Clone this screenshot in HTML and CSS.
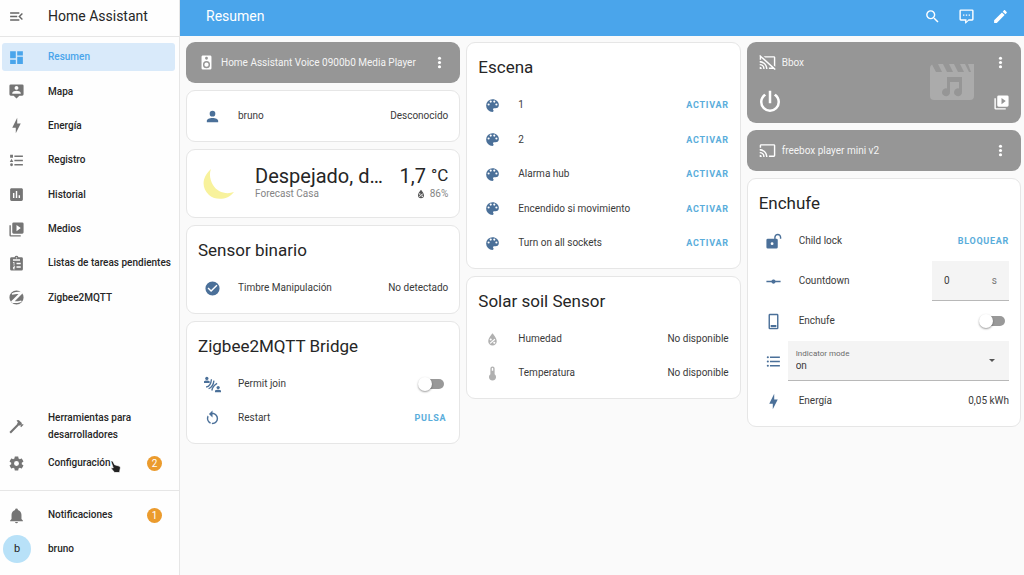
FILE: index.html
```html
<!DOCTYPE html>
<html lang="es">
<head>
<meta charset="utf-8">
<meta name="viewport" content="width=device-width, initial-scale=1">
<title>Resumen – Home Assistant</title>
<link rel="stylesheet" href="styles.css">
</head>
<body>
<svg class="sprite" aria-hidden="true">
  <symbol id="menu-open" viewBox="0 0 24 24"><path d="M21,15.61L19.59,17L14.58,12L19.59,7L21,8.39L17.44,12L21,15.61M3,6H16V8H3V6M3,13V11H13V13H3M3,18V16H16V18H3Z"/></symbol>
  <symbol id="dashboard" viewBox="0 0 24 24"><path d="M13,3V9H21V3M13,21H21V11H13M3,21H11V15H3M3,13H11V3H3V13Z"/></symbol>
  <symbol id="map" viewBox="0 0 24 24"><path d="M20,2H4A2,2 0 0,0 2,4V16A2,2 0 0,0 4,18H8L12,22L16,18H20A2,2 0 0,0 22,16V4A2,2 0 0,0 20,2M12,4.3C13.5,4.3 14.7,5.5 14.7,7C14.7,8.5 13.5,9.7 12,9.7C10.5,9.7 9.3,8.5 9.3,7C9.3,5.5 10.5,4.3 12,4.3M18,15H6V14.1C6,12.1 10,11 12,11C14,11 18,12.1 18,14.1V15Z" fill-rule="evenodd"/></symbol>
  <symbol id="bolt" viewBox="0 0 24 24"><path d="M11 15H6L13 1V9H18L11 23V15Z"/></symbol>
  <symbol id="logbook" viewBox="0 0 24 24"><path d="M5,9.5L7.5,14H2.5L5,9.5M3,4H7V8H3V4M5,20A2,2 0 0,0 7,18A2,2 0 0,0 5,16A2,2 0 0,0 3,18A2,2 0 0,0 5,20M9,5V7H21V5H9M9,19H21V17H9V19M9,13H21V11H9V13Z"/></symbol>
  <symbol id="chart" viewBox="0 0 24 24"><path fill-rule="evenodd" d="M9 17H7V10H9V17M13 17H11V7H13V17M17 17H15V13H17V17M19 3H5C3.89 3 3 3.89 3 5V19C3 20.1 3.9 21 5 21H19C20.11 21 21 20.11 21 19V5C21 3.9 20.1 3 19 3Z"/></symbol>
  <symbol id="media" viewBox="0 0 24 24"><path fill-rule="evenodd" d="M4,6H2V20A2,2 0 0,0 4,22H18V20H4V6M20,2H8A2,2 0 0,0 6,4V16A2,2 0 0,0 8,18H20A2,2 0 0,0 22,16V4A2,2 0 0,0 20,2M12,14.5V5.5L18,10L12,14.5Z"/></symbol>
  <symbol id="clipboard" viewBox="0 0 24 24"><path fill-rule="evenodd" d="M19 3H14.8A3 3 0 0 0 9.2 3H5A2 2 0 0 0 3 5V20A2 2 0 0 0 5 22H19A2 2 0 0 0 21 20V5A2 2 0 0 0 19 3M12 3A1 1 0 1 1 12 5A1 1 0 0 1 12 3M7 6H17V8H7ZM7 10H9V14H8V11H7ZM7 15H10V18H8V19H10V20H7V17H9V16H7ZM12 11H18V13H12ZM12 16H18V18H12Z"/></symbol>
  <symbol id="zigbee" viewBox="0 0 24 24"><path fill-rule="evenodd" d="M12 2A10 10 0 1 0 12 22A10 10 0 1 0 12 2M5.200 6.200L5.800 8.200C9 7.200 11.500 7 14.800 7L4.200 17.600L6.300 19.900C11 20 15 19.700 19.300 18.200L18.700 16.300C15.500 17.200 12.500 17.400 9.500 17.400L20.400 6.500L17.900 4C13 4 9 4.600 5.200 6.200Z"/></symbol>
  <symbol id="hammer" viewBox="0 0 24 24"><path d="M2,19.63L13.43,8.2L12.72,7.5L14.14,6.07L12,3.89C13.2,2.7 15.09,2.7 16.27,3.89L19.87,7.5L18.45,8.91H21.29L22,9.62L18.45,13.21L17.74,12.5V9.62L16.27,11.04L15.56,10.33L4.13,21.76L2,19.63Z"/></symbol>
  <symbol id="cog" viewBox="0 0 24 24"><path d="M12,15.5A3.5,3.5 0 0,1 8.5,12A3.5,3.5 0 0,1 12,8.5A3.5,3.5 0 0,1 15.5,12A3.5,3.5 0 0,1 12,15.5M19.43,12.97C19.47,12.65 19.5,12.33 19.5,12C19.5,11.67 19.47,11.34 19.43,11L21.54,9.37C21.73,9.22 21.78,8.95 21.66,8.73L19.66,5.27C19.54,5.05 19.27,4.96 19.05,5.05L16.56,6.05C16.04,5.66 15.5,5.32 14.87,5.07L14.5,2.42C14.46,2.18 14.25,2 14,2H10C9.75,2 9.54,2.18 9.5,2.42L9.13,5.07C8.5,5.32 7.96,5.66 7.44,6.05L4.95,5.05C4.73,4.96 4.46,5.05 4.34,5.27L2.34,8.73C2.21,8.95 2.27,9.22 2.46,9.37L4.57,11C4.53,11.34 4.5,11.67 4.5,12C4.5,12.33 4.53,12.65 4.57,12.97L2.46,14.63C2.27,14.78 2.21,15.05 2.34,15.27L4.34,18.73C4.46,18.95 4.73,19.03 4.95,18.95L7.44,17.94C7.96,18.34 8.5,18.68 9.13,18.93L9.5,21.58C9.54,21.82 9.75,22 10,22H14C14.25,22 14.46,21.82 14.5,21.58L14.87,18.93C15.5,18.67 16.04,18.34 16.56,17.94L19.05,18.95C19.27,19.03 19.54,18.95 19.66,18.73L21.66,15.27C21.78,15.05 21.73,14.78 21.54,14.63L19.43,12.97Z" fill-rule="evenodd"/></symbol>
  <symbol id="bell" viewBox="0 0 24 24"><path d="M21,19V20H3V19L5,17V11C5,7.9 7.03,5.17 10,4.29C10,4.19 10,4.1 10,4A2,2 0 0,1 12,2A2,2 0 0,1 14,4C14,4.1 14,4.19 14,4.29C16.97,5.17 19,7.9 19,11V17L21,19M14,21A2,2 0 0,1 12,23A2,2 0 0,1 10,21"/></symbol>
  <symbol id="palette" viewBox="0 0 24 24"><path fill-rule="evenodd" d="M17.5,12A1.5,1.5 0 0,1 16,10.5A1.5,1.5 0 0,1 17.5,9A1.5,1.5 0 0,1 19,10.5A1.5,1.5 0 0,1 17.5,12M14.5,8A1.5,1.5 0 0,1 13,6.5A1.5,1.5 0 0,1 14.5,5A1.5,1.5 0 0,1 16,6.5A1.5,1.5 0 0,1 14.5,8M9.5,8A1.5,1.5 0 0,1 8,6.5A1.5,1.5 0 0,1 9.5,5A1.5,1.5 0 0,1 11,6.5A1.5,1.5 0 0,1 9.5,8M6.5,12A1.5,1.5 0 0,1 5,10.5A1.5,1.5 0 0,1 6.5,9A1.5,1.5 0 0,1 8,10.5A1.5,1.5 0 0,1 6.5,12M12,3A9,9 0 0,0 3,12A9,9 0 0,0 12,21A1.5,1.5 0 0,0 13.5,19.5C13.5,19.11 13.35,18.76 13.11,18.5C12.88,18.23 12.73,17.88 12.73,17.5A1.5,1.5 0 0,1 14.23,16H16A5,5 0 0,0 21,11C21,6.58 16.97,3 12,3Z"/></symbol>
  <symbol id="account" viewBox="0 0 24 24"><path d="M12,4A4,4 0 0,1 16,8A4,4 0 0,1 12,12A4,4 0 0,1 8,8A4,4 0 0,1 12,4M12,14C16.42,14 20,15.79 20,18V20H4V18C4,15.79 7.58,14 12,14Z"/></symbol>
  <symbol id="check" viewBox="0 0 24 24"><path fill-rule="evenodd" d="M12 2A10 10 0 1 0 12 22A10 10 0 1 0 12 2M10 17L5 12L6.41 10.59L10 14.17L17.59 6.58L19 8L10 17Z"/></symbol>
  <symbol id="proximity" viewBox="0 0 24 24"><circle cx="4" cy="3.500" r="2.300"/><path d="M0 10V7.500C1 6 6.500 6 8 7.500V10ZM15.500 23V20.500C17 19 22.500 19 24 20.500V23Z"/><circle cx="20" cy="16.300" r="2.300"/><path fill="none" stroke="currentColor" stroke-width="1.900" d="M3 15.500C7 15 10 11 10.500 4.500M6.500 18C11 16 13.500 12 14 6.500M11 20.500C12 16 14 13 18.500 10.500"/></symbol>
  <symbol id="restart" viewBox="0 0 24 24"><path d="M12,4C14.1,4 16.1,4.8 17.6,6.3C20.7,9.4 20.7,14.5 17.6,17.6C15.8,19.5 13.3,20.2 10.9,19.9L11.4,17.9C13.1,18.1 14.9,17.5 16.2,16.2C18.5,13.9 18.5,10.1 16.2,7.7C15.1,6.6 13.5,6 12,6V10.6L7,5.6L12,0.6V4M6.3,17.6C3.7,15 3.3,11 5.1,7.9L6.6,9.4C5.5,11.6 5.9,14.4 7.8,16.2C8.3,16.7 8.9,17.1 9.6,17.4L9,19.4C8,19 7.1,18.4 6.3,17.6Z"/></symbol>
  <symbol id="speaker" viewBox="0 0 24 24"><path fill-rule="evenodd" d="M12,12A3,3 0 0,0 9,15A3,3 0 0,0 12,18A3,3 0 0,0 15,15A3,3 0 0,0 12,12M12,20A5,5 0 0,1 7,15A5,5 0 0,1 12,10A5,5 0 0,1 17,15A5,5 0 0,1 12,20M12,4A2,2 0 0,1 14,6A2,2 0 0,1 12,8C10.89,8 10,7.1 10,6C10,4.89 10.89,4 12,4M17,2H7C5.89,2 5,2.89 5,4V20A2,2 0 0,0 7,22H17A2,2 0 0,0 19,20V4C19,2.89 18.1,2 17,2Z"/></symbol>
  <symbol id="dots" viewBox="0 0 24 24"><circle cx="12" cy="6" r="2.200"/><circle cx="12" cy="12" r="2.200"/><circle cx="12" cy="18" r="2.200"/></symbol>
  <symbol id="cast" viewBox="0 0 24 24"><path d="M1,10V12A9,9 0 0,1 10,21H12C12,14.92 7.07,10 1,10M1,14V16A5,5 0 0,1 6,21H8A7,7 0 0,0 1,14M1,18V21H4A3,3 0 0,0 1,18M21,3H3C1.89,3 1,3.89 1,5V8H3V5H21V19H14V21H21A2,2 0 0,0 23,19V5C23,3.89 22.1,3 21,3Z"/></symbol>
  <symbol id="cast-off" viewBox="0 0 24 24"><path d="M1.6,1.27L0.25,2.75L1.41,3.8C1.16,4.13 1,4.55 1,5V8H3V5.23L18.2,19H14V21H20.41L22.31,22.72L23.65,21.24M6.5,3L8.7,5H21V16.14L23,17.95V5C23,3.89 22.1,3 21,3M1,10V12A9,9 0 0,1 10,21H12C12,14.92 7.08,10 1,10M1,14V16A5,5 0 0,1 6,21H8A7,7 0 0,0 1,14M1,18V21H4A3,3 0 0,0 1,18Z"/></symbol>
  <symbol id="power" viewBox="0 0 24 24"><path d="M16.56,5.44L15.11,6.89C16.84,7.94 18,9.83 18,12A6,6 0 0,1 12,18A6,6 0 0,1 6,12C6,9.83 7.16,7.94 8.88,6.88L7.44,5.44C5.36,6.88 4,9.28 4,12A8,8 0 0,0 12,20A8,8 0 0,0 20,12C20,9.28 18.64,6.88 16.56,5.44M13,3H11V13H13"/></symbol>
  <symbol id="movie" viewBox="0 0 24 20"><path fill-rule="evenodd" d="M1 3A2 2 0 0 1 2 1.200L4 5H7L5 1H7.500L9.500 5H12.500L10.500 1H13L15 5H18L16 1H18.500L20.500 5H21.500L20 1H23V17A2 2 0 0 1 21 19H3A2 2 0 0 1 1 17ZM9.500 7.500V13.200A2 2 0 1 0 11 15V10H15.500V13.200A2 2 0 1 0 17 15V7.500Z"/></symbol>
  <symbol id="search" viewBox="0 0 24 24"><path d="M9.5,3A6.5,6.5 0 0,1 16,9.5C16,11.11 15.41,12.59 14.44,13.73L14.71,14H15.5L20.5,19L19,20.5L14,15.5V14.71L13.73,14.44C12.59,15.41 11.11,16 9.5,16A6.5,6.5 0 0,1 3,9.500A6.5,6.5 0 0,1 9.5,3M9.5,5C7,5 5,7 5,9.500C5,12 7,14 9.500,14C12,14 14,12 14,9.500C14,7 12,5 9.500,5Z"/></symbol>
  <symbol id="assist" viewBox="0 0 24 24"><path fill-rule="evenodd" d="M4 2H20A2 2 0 0 1 22 4V16A2 2 0 0 1 20 18H15L11 22H10V18H4A2 2 0 0 1 2 16V4A2 2 0 0 1 4 2M4 4V16H12V19L15 16H20V4ZM7 9H9V11H7ZM11 9H13V11H11ZM15 9H17V11H15Z"/></symbol>
  <symbol id="pencil" viewBox="0 0 24 24"><path d="M20.71,7.04C21.1,6.65 21.1,6 20.71,5.63L18.37,3.29C18,2.9 17.35,2.9 16.96,3.29L15.12,5.12L18.87,8.87M3,17.25V21H6.75L17.81,9.93L14.06,6.18L3,17.25Z"/></symbol>
  <symbol id="unlock" viewBox="0 0 24 24"><path fill-rule="evenodd" d="M18,1C15.24,1 13,3.24 13,6V8H4A2,2 0 0,0 2,10V20A2,2 0 0,0 4,22H16A2,2 0 0,0 18,20V10A2,2 0 0,0 16,8H15V6A3,3 0 0,1 18,3A3,3 0 0,1 21,6V8H23V6C23,3.24 20.76,1 18,1M10,13A2,2 0 0,1 12,15A2,2 0 0,1 10,17A2,2 0 0,1 8,15A2,2 0 0,1 10,13Z"/></symbol>
  <symbol id="vertex" viewBox="0 0 24 24"><path d="M2,11H9.17C9.58,9.83 10.69,9 12,9C13.31,9 14.42,9.83 14.83,11H22V13H14.83C14.42,14.17 13.31,15 12,15C10.69,15 9.58,14.17 9.17,13H2V11Z"/></symbol>
  <symbol id="switch" viewBox="0 0 24 24"><path fill-rule="evenodd" d="M7 1H17A2 2 0 0 1 19 3V21A2 2 0 0 1 17 23H7A2 2 0 0 1 5 21V3A2 2 0 0 1 7 1M7 3V21H17V3ZM8 17H16V20H8Z"/></symbol>
  <symbol id="list" viewBox="0 0 24 24"><path d="M7,5H21V7H7V5M7,13V11H21V13H7M7,19V17H21V19H7"/><circle cx="4" cy="6" r="1.500"/><circle cx="4" cy="12" r="1.500"/><circle cx="4" cy="18" r="1.500"/></symbol>
  <symbol id="humidity" viewBox="0 0 24 24"><path fill-rule="evenodd" d="M12 3.300S6 10 6 14.300A6 6 0 0 0 18 14.300C18 10 12 3.300 12 3.300M9.500 10.500A1.500 1.500 0 1 1 9.500 13.500A1.500 1.500 0 0 1 9.500 10.500M14.800 11L16 12.200L9.200 18L8 16.800ZM14.500 15A1.500 1.500 0 1 1 14.500 18A1.500 1.500 0 0 1 14.500 15"/></symbol>
  <symbol id="thermometer" viewBox="0 0 24 24"><path fill-rule="evenodd" d="M15 13V5A3 3 0 0 0 9 5V13A5 5 0 1 0 15 13M12 4A1 1 0 0 1 13 5V8H11V5A1 1 0 0 1 12 4Z"/></symbol>
</svg>

<div class="app">
  <aside class="sidebar">
    <header class="brand">
      <button class="icon-button" aria-label="Alternar barra lateral"><svg class="icon"><use href="#menu-open"/></svg></button>
      <span>Home Assistant</span>
    </header>
    <nav class="nav" aria-label="Paneles">
      <a class="nav-item active" href="#resumen"><svg class="icon"><use href="#dashboard"/></svg><span>Resumen</span></a>
      <a class="nav-item" href="#mapa"><svg class="icon"><use href="#map"/></svg><span>Mapa</span></a>
      <a class="nav-item" href="#energia"><svg class="icon"><use href="#bolt"/></svg><span>Energía</span></a>
      <a class="nav-item" href="#registro"><svg class="icon"><use href="#logbook"/></svg><span>Registro</span></a>
      <a class="nav-item" href="#historial"><svg class="icon"><use href="#chart"/></svg><span>Historial</span></a>
      <a class="nav-item" href="#medios"><svg class="icon"><use href="#media"/></svg><span>Medios</span></a>
      <a class="nav-item" href="#tareas"><svg class="icon"><use href="#clipboard"/></svg><span>Listas de tareas pendientes</span></a>
      <a class="nav-item" href="#zigbee2mqtt"><svg class="icon"><use href="#zigbee"/></svg><span>Zigbee2MQTT</span></a>
    </nav>
    <nav class="nav-tools" aria-label="Herramientas">
      <a class="nav-item tall" href="#herramientas"><svg class="icon"><use href="#hammer"/></svg><span>Herramientas para desarrolladores</span></a>
      <a class="nav-item" href="#configuracion"><svg class="icon"><use href="#cog"/></svg><span class="pointed">Configuración
        <svg class="cursor" viewBox="0 0 12 15" aria-hidden="true"><path d="M1 1.500C2 .5 3 1 3.500 2L5 5L10 6.500C11.500 7 11.500 8.500 11 10L10.500 13.500H5L1.500 9.500C1 8.500 2 8 3 8.500L3.500 8.500Z" fill="#222" stroke="#fff" stroke-width=".8"/></svg></span><span class="badge">2</span></a>
    </nav>
    <div class="nav-user">
      <a class="nav-item" href="#notificaciones"><svg class="icon"><use href="#bell"/></svg><span>Notificaciones</span><span class="badge">1</span></a>
      <a class="nav-item profile" href="#perfil"><span class="avatar">b</span><span>bruno</span></a>
    </div>
  </aside>

  <div class="content">
    <header class="toolbar">
      <h1>Resumen</h1>
      <button class="icon-button" aria-label="Buscar"><svg class="icon"><use href="#search"/></svg></button>
      <button class="icon-button" aria-label="Asistente"><svg class="icon"><use href="#assist"/></svg></button>
      <button class="icon-button" aria-label="Editar"><svg class="icon"><use href="#pencil"/></svg></button>
    </header>

    <main class="board">
      <div class="column">
        <section class="media-card">
          <div class="media-head"><svg class="icon"><use href="#speaker"/></svg><span>Home Assistant Voice 0900b0 Media Player</span><button class="icon-button" aria-label="Más opciones"><svg class="icon"><use href="#dots"/></svg></button></div>
        </section>
        <section class="card untitled">
          <div class="row"><svg class="icon"><use href="#account"/></svg><span class="name">bruno</span><span>Desconocido</span></div>
        </section>
        <section class="card weather">
          <svg class="moon" viewBox="0 0 32 32" aria-hidden="true"><path d="M8 1C-1 9-2 20 6 27C13 33 25 32 31 24C23 27 14 24 10 17C7 12 6 6 8 1Z" fill="#f8f29c"/></svg>
          <div class="forecast"><span class="condition">Despejado, de noche</span><span class="minor">Forecast Casa</span></div>
          <div class="reading"><span class="temperature">1,7 <span class="unit">°C</span></span><span class="minor humidity"><svg class="icon"><use href="#humidity"/></svg>86%</span></div>
        </section>
        <section class="card">
          <h2>Sensor binario</h2>
          <div class="rows">
            <div class="row"><svg class="icon"><use href="#check"/></svg><span class="name">Timbre Manipulación</span><span>No detectado</span></div>
          </div>
        </section>
        <section class="card">
          <h2>Zigbee2MQTT Bridge</h2>
          <div class="rows">
            <div class="row"><svg class="icon"><use href="#proximity"/></svg><label class="name" for="permit">Permit join</label><input class="switch" id="permit" type="checkbox"></div>
            <div class="row"><svg class="icon"><use href="#restart"/></svg><span class="name">Restart</span><button class="action inset-end">PULSA</button></div>
          </div>
        </section>
      </div>

      <div class="column">
        <section class="card">
          <h2>Escena</h2>
          <div class="rows scenes">
            <div class="row"><svg class="icon"><use href="#palette"/></svg><span class="name">1</span><button class="action">ACTIVAR</button></div>
            <div class="row"><svg class="icon"><use href="#palette"/></svg><span class="name">2</span><button class="action">ACTIVAR</button></div>
            <div class="row"><svg class="icon"><use href="#palette"/></svg><span class="name">Alarma hub</span><button class="action">ACTIVAR</button></div>
            <div class="row"><svg class="icon"><use href="#palette"/></svg><span class="name">Encendido si movimiento</span><button class="action">ACTIVAR</button></div>
            <div class="row"><svg class="icon"><use href="#palette"/></svg><span class="name">Turn on all sockets</span><button class="action">ACTIVAR</button></div>
          </div>
        </section>
        <section class="card">
          <h2>Solar soil Sensor</h2>
          <div class="rows">
            <div class="row unavailable"><svg class="icon"><use href="#humidity"/></svg><span class="name">Humedad</span><span>No disponible</span></div>
            <div class="row unavailable"><svg class="icon"><use href="#thermometer"/></svg><span class="name">Temperatura</span><span>No disponible</span></div>
          </div>
        </section>
      </div>

      <div class="column">
        <section class="media-card with-controls">
          <div class="media-head"><svg class="icon"><use href="#cast-off"/></svg><span>Bbox</span><button class="icon-button" aria-label="Más opciones"><svg class="icon"><use href="#dots"/></svg></button></div>
          <div class="media-controls">
            <button class="icon-button" aria-label="Encender"><svg class="icon large"><use href="#power"/></svg></button>
            <button class="icon-button" aria-label="Explorar medios"><svg class="icon"><use href="#media"/></svg></button>
          </div>
          <svg class="artwork" aria-hidden="true"><use href="#movie"/></svg>
        </section>
        <section class="media-card">
          <div class="media-head"><svg class="icon"><use href="#cast"/></svg><span>freebox player mini v2</span><button class="icon-button" aria-label="Más opciones"><svg class="icon"><use href="#dots"/></svg></button></div>
        </section>
        <section class="card">
          <h2>Enchufe</h2>
          <div class="rows">
            <div class="row"><svg class="icon"><use href="#unlock"/></svg><span class="name">Child lock</span><button class="action">BLOQUEAR</button></div>
            <div class="row"><svg class="icon"><use href="#vertex"/></svg><label class="name" for="countdown">Countdown</label><span class="field number"><input id="countdown" type="text" inputmode="numeric" value="0"><span>s</span></span></div>
            <div class="row"><svg class="icon"><use href="#switch"/></svg><label class="name" for="plug">Enchufe</label><input class="switch" id="plug" type="checkbox"></div>
            <div class="row"><svg class="icon"><use href="#list"/></svg><span class="field pick"><label for="mode">Indicator mode</label><select id="mode"><option>on</option><option>off</option></select></span></div>
            <div class="row"><svg class="icon"><use href="#bolt"/></svg><span class="name">Energía</span><span>0,05 kWh</span></div>
          </div>
        </section>
      </div>
    </main>
  </div>
</div>
</body>
</html>
```
FILE: styles.css
```css
:root {
  --blue: #4aa5eb;
  --state: #4b7099;
  --grey: #969696;
  --text: #262626;
  --line: #e6e6e6;
}

* { box-sizing: border-box; }

body {
  margin: 0;
  background: #fafafa;
  color: var(--text);
  font: 10px/16px Roboto, "Noto Sans", sans-serif;
}

a { color: inherit; text-decoration: none; }

button, input, select {
  margin: 0;
  padding: 0;
  border: 0;
  background: none;
  color: inherit;
  font: inherit;
}

.sprite { position: absolute; width: 0; height: 0; }

.icon {
  display: block;
  flex: none;
  width: 17px;
  height: 17px;
  fill: currentColor;
}

.icon.large { width: 30px; height: 30px; }
.icon-button { display: flex; cursor: pointer; }

.app {
  display: grid;
  grid-template-columns: 180px 1fr;
  min-height: 100vh;
}

/* Sidebar */
.sidebar {
  display: flex;
  flex-direction: column;
  border-right: 1px solid var(--line);
  background: #fefefe;
}

.brand {
  display: flex;
  align-items: center;
  gap: 23px;
  height: 37px;
  padding: 0 8px 4px;
  border-bottom: 1px solid var(--line);
  font-size: 14px;
}

.brand .icon { color: #666; }

.nav {
  display: grid;
  grid-auto-rows: 1fr;
  align-items: center;
  min-height: 275px;
  padding: 0 4px 0 2px;
  margin-top: 3px;
}

.nav-item {
  display: flex;
  align-items: center;
  gap: 23px;
  min-height: 28px;
  padding: 0 0 0 6px;
  border-radius: 3px;
  font-weight: 500;
  white-space: nowrap;
}

.nav-item .icon { color: #757575; }
.nav-item.active { background: #d9eafa; color: var(--blue); }
.nav-item.active .icon { color: var(--blue); }

.nav-tools {
  display: grid;
  gap: 6px;
  margin-top: auto;
  padding: 0 4px 13px 2px;
  border-bottom: 1px solid var(--line);
}

.nav-item.tall { line-height: 17px; white-space: normal; }
.nav-item.tall span { max-width: 100px; }
.pointed { position: relative; }

.cursor {
  position: absolute;
  top: 5px;
  right: -10px;
  width: 11px;
  height: 14px;
}

.badge {
  width: 15px;
  height: 15px;
  margin: 0 13px 0 auto;
  border-radius: 50%;
  background: #eb9b2d;
  color: #fff;
  font-weight: 400;
  line-height: 15px;
  text-align: center;
}

.nav-user {
  display: grid;
  gap: 6px;
  padding: 10px 4px 12px 2px;
}

.nav-item.profile { gap: 17px; padding-left: 1px; }

.avatar {
  width: 28px;
  height: 28px;
  border-radius: 50%;
  background: #b8e1f8;
  font-size: 11px;
  font-weight: 400;
  line-height: 28px;
  text-align: center;
}

/* Top bar */
.toolbar {
  display: flex;
  align-items: center;
  gap: 17px;
  height: 36px;
  padding: 0 15px 4px 26px;
  background: var(--blue);
  color: #fff;
}

.toolbar h1 {
  flex: 1;
  margin: 0;
  font-size: 14px;
  font-weight: 400;
}

/* Board */
.board {
  display: grid;
  grid-template-columns: repeat(3, minmax(0, 1fr));
  align-items: start;
  gap: 6px;
  padding: 6px 3px 6px 6px;
}

.column {
  display: grid;
  grid-template-columns: minmax(0, 1fr);
  gap: 7px;
}

.card {
  padding: 0 11px 11px;
  border: 1px solid var(--line);
  border-radius: 9px;
  background: #fff;
}

.card h2 {
  margin: 0;
  padding: 12px 0;
  font-size: 17px;
  font-weight: 400;
  line-height: 24px;
}

.rows { display: grid; gap: 6px; }
.rows.scenes { align-content: space-between; min-height: 166px; }

.row {
  display: flex;
  align-items: center;
  min-height: 28px;
  padding-left: 6px;
  color: #3a3a3a;
}

.row .icon { color: var(--state); }
.row.unavailable .icon { color: #b0b0b0; }
.name { flex: 1; margin-left: 17px; }
.card.untitled { padding-top: 11px; }

.action {
  color: #5aaddb;
  font-size: 9px;
  font-weight: 700;
  letter-spacing: 0.08em;
  cursor: pointer;
}

.action.inset-end { margin-right: 2px; }

.switch {
  appearance: none;
  position: relative;
  width: 23px;
  height: 10px;
  margin-right: 4px;
  border-radius: 5px;
  background: #999;
}

.switch::before {
  content: "";
  position: absolute;
  top: -2px;
  left: -3px;
  width: 14px;
  height: 14px;
  border-radius: 50%;
  background: #fff;
  box-shadow: 0 1px 2px #0006;
}

.field {
  display: flex;
  height: 40px;
  border-bottom: 1px solid #b8b8b8;
  background: #f4f4f4;
}

.number {
  align-items: center;
  justify-content: space-between;
  width: 77px;
  padding: 0 12px;
}

.number input { width: 24px; }
.number span { color: #777; }

.pick {
  position: relative;
  flex: 1;
  flex-direction: column;
  margin-left: 6px;
  padding: 5px 0 0 8px;
}

.pick label { color: #6b6b6b; font-size: 8px; }

.pick select {
  appearance: none;
  height: 12px;
  margin-top: -2px;
  line-height: 12px;
}

.pick::after {
  content: "";
  position: absolute;
  top: 18px;
  right: 14px;
  border: 3px solid transparent;
  border-top-color: #555;
  border-bottom: 0;
}

/* Weather */
.weather {
  display: flex;
  align-items: center;
  min-height: 69px;
  padding-bottom: 0;
}

.moon { flex: none; width: 32px; height: 32px; margin: 0 20px 0 5px; }

.forecast {
  display: flex;
  flex: 1;
  flex-direction: column;
  min-width: 0;
  padding-bottom: 4px;
}

.condition {
  overflow: hidden;
  font-size: 20px;
  line-height: 24px;
  text-overflow: ellipsis;
  white-space: nowrap;
}

.minor { color: #858585; line-height: 12px; }

.reading {
  display: flex;
  flex-direction: column;
  align-items: flex-end;
  margin-left: 16px;
  padding-bottom: 4px;
}

.temperature { font-size: 20px; line-height: 24px; white-space: nowrap; }
.unit { font-size: 17px; vertical-align: top; line-height: 22px; }
.humidity { display: flex; align-items: center; gap: 3px; }
.humidity .icon { width: 12px; height: 12px; color: #555; }

/* Media players */
.media-card {
  position: relative;
  padding: 12px;
  border-radius: 9px;
  background: var(--grey);
  color: #f4f4f4;
}

.media-card.with-controls { padding-bottom: 6px; }
.media-head { display: flex; align-items: center; gap: 6px; }
.media-head span { flex: 1; }
.media-head .icon, .media-controls .icon { color: #fff; }

.media-controls {
  display: flex;
  align-items: center;
  justify-content: space-between;
  margin: 16px -1px 0 -4px;
}

.artwork {
  position: absolute;
  top: 20px;
  right: 45px;
  width: 48px;
  height: 40px;
  fill: #ababab;
}
```
